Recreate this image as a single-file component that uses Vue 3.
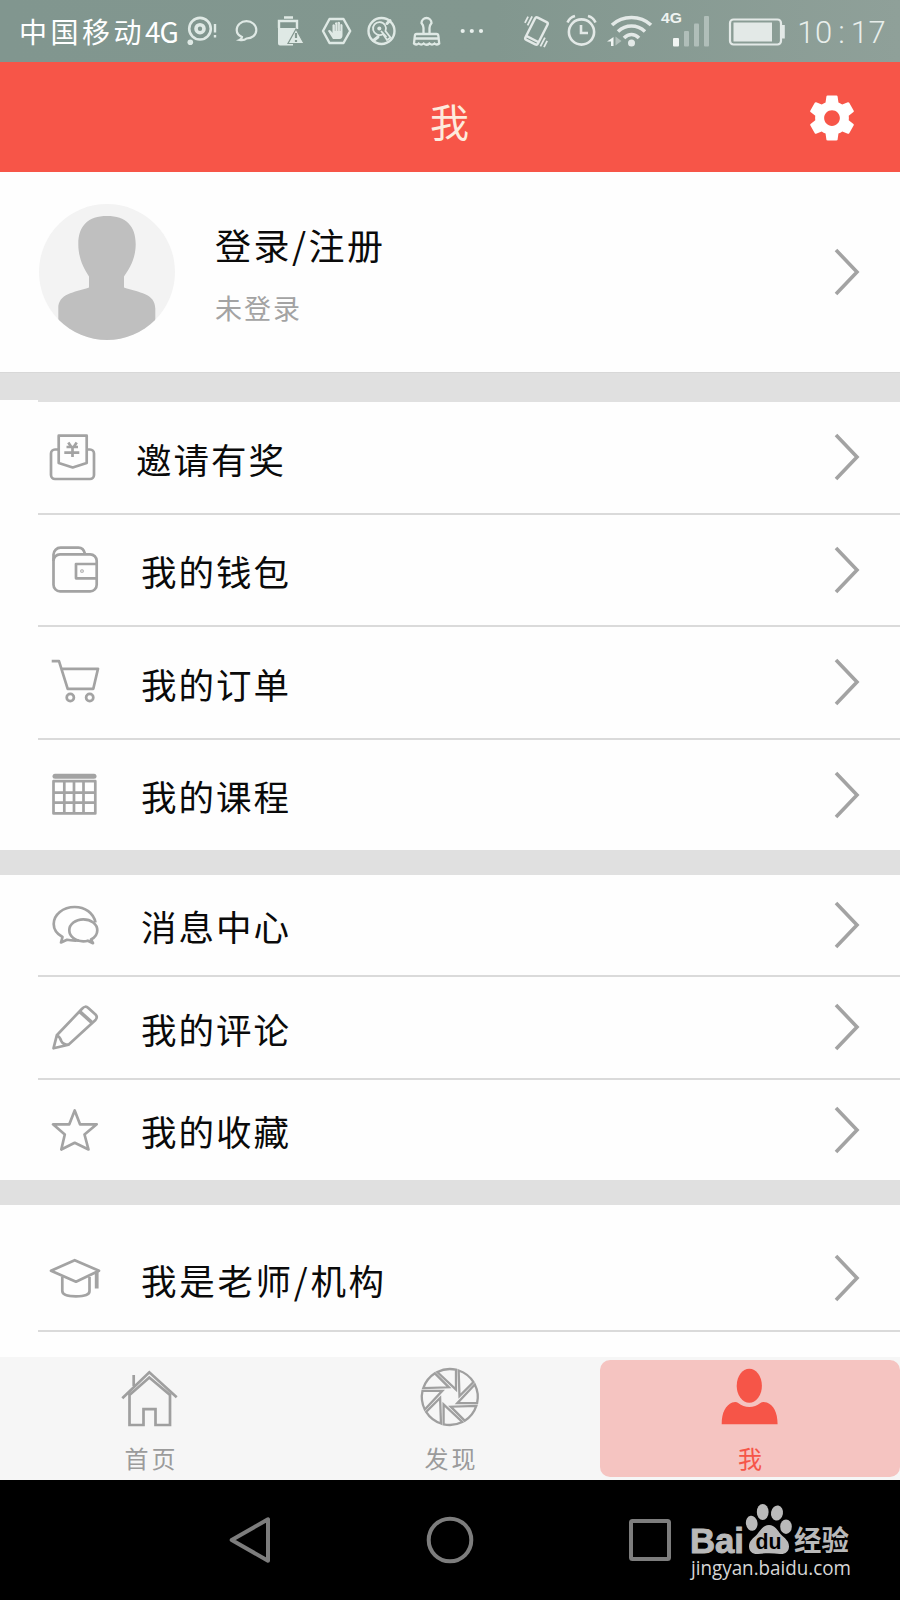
<script setup>
const groups = [
  {
    name: 'assets',
    rows: [
      {
        label: '邀请有奖', size: 'first',
        icon: '<path d="M12.7 20.5H9a4 4 0 0 0-4 4V46a4 4 0 0 0 4 4h35a4 4 0 0 0 4-4V24.500a4 4 0 0 0-4-4h-3.300M12.700 6.700h28V34l-14 4.500-14-4.500zM22.300 13.500l2.700 4M30.700 13.500l-2.700 4M20.500 18h11.500M18.300 23.700h15M26.500 18v10"/>'
      },
      {
        label: '我的钱包', size: 'second',
        icon: '<rect x="7.500" y="12.300" width="43.200" height="37" rx="6.500"/><path d="M7.500 19v-6.500a7 7 0 0 1 7-6.800h18q5 0 6.500 6.200M50.700 22H30v14.300h20.700"/><circle cx="36" cy="29" r=".5"/>'
      },
      {
        label: '我的订单', size: 'third',
        icon: '<path d="M5.700 7.200H13l8.700 27.600h25.600L52 14.800H15.800"/><circle cx="24.300" cy="43.500" r="3.600"/><circle cx="43.700" cy="43.500" r="3.600"/>'
      },
      {
        label: '我的课程', size: 'fourth',
        icon: '<path stroke-width="5" stroke-linecap="round" d="M9 9.200H48"/><path d="M7.500 14.200h41.800v32.200H7.500zM18.300 14v32M28 14v32M37.500 14v32M7.500 25.700h42M7.500 35.700h42"/>'
      }
    ]
  },
  {
    name: 'messages',
    rows: [
      {
        label: '消息中心', size: 'fifth',
        icon: '<path d="M49.500 25.500C47.500 16 39 10 28.700 10 17 10 7.700 17.500 7.700 27c0 5.500 3.300 10 8.800 13l-1.500 5.500 6-2.700c4 1 8 .7 12 .7"/><path d="M45 42.500c4-2 6.300-5.500 6.300-9.200 0-6.200-6.200-11-14-11s-14 5-14 11 6 11 14 11q2.500 0 4.500-.6l5.200 2.500z"/>'
      },
      {
        label: '我的评论', size: 'sixth',
        icon: '<path d="M7.500 49.300l3.300-13L36.300 9.500q3-3.300 6-.5l7.200 6.500q2.500 2.500 0 5.500L22.500 45.700zM10.800 36.500q3 1 4.500 5.500 1.500 3.500 7 3.700"/><path stroke-width="3.600" d="M34 12.800l11.700 10.500"/>'
      },
      {
        label: '我的收藏', size: 'seventh',
        icon: '<path d="M28.700 8.500L34 22.300h16.700L38.500 32.500l4 15-13.800-6.700-13.400 6.700 3.500-15L7 22.300h16.300z"/>'
      }
    ]
  },
  {
    name: 'teacher',
    rows: [
      {
        label: '我是老师/机构', size: 'eighth',
        icon: '<path d="M5 20.700L28.700 10.200 53 20.700 30 31.700z"/><path d="M16.300 27v14q0 5.300 13.700 5.300T43.500 41V27"/><path stroke-width="3.800" d="M50.700 22v16.500"/>'
      }
    ]
  }
]
const blades = [0, 45, 90, 135, 180, 225, 270, 315]
const clock = ['1', '0', ':', '1', '7']
</script>

<template>
  <div class="screen">
    <div class="status">
      <span class="carrier">中国移动<i>4G</i></span>
      <svg class="notices" viewBox="186 0 304 62" fill="none" stroke="#dfe9e5" stroke-width="2.200">
        <circle cx="201" cy="28.700" r="10.800" stroke-width="2.600" />
        <circle cx="201" cy="28.700" r="4" stroke-width="3.600" />
        <circle cx="191.300" cy="42.300" r="2.800" fill="#dfe9e5" stroke="none" />
        <path d="M216 24v8.500M216 35v2.500" stroke-width="2.400" />
        <path d="M240.500 40c2-1 2.500-2 2.500-3-3.500-1.500-5.300-4-5.300-7 0-5 4.300-8.800 9.800-8.800s9.800 3.800 9.800 8.800-4.300 8.500-9.800 8.500c-2 2-4 2-7 1.500z" />
        <path d="M280 28v-7h18v8M285 17.500h9" stroke-width="2.400" />
        <path d="M279 28h19l-9 16h5v1.500h-13q-2 0-2-2z" fill="#dfe9e5" stroke="none" />
        <path d="M297 29l8 14.500h-16z" fill="#dfe9e5" stroke="#84978f" stroke-width="1.200" />
        <path d="M297 33v5M297 40v2" stroke="#84978f" />
        <path d="M330.500 19h14l6.700 12-6.700 12h-14L324 31z" stroke-width="2.400" stroke-linejoin="round" />
        <path d="M334 39l-5-8q1-2 3 0l1.500 2v-8q1.300-1.500 2.500 0v-2q1.300-1.500 2.500 0v-.5q1.300-1.500 2.500 0v2q1.500-1 2.500.5V35q0 4-3 4z" fill="#dfe9e5" stroke="none" />
        <path d="M336.200 24v7M338.700 23v8M341.200 24v7" stroke="#84978f" stroke-width=".5" />
        <circle cx="382.500" cy="31" r="13" stroke-width="2.400" />
        <path d="M384 34a6.500 6.500 0 1 1 2.500-3l5 6.500-3.500 2.500z" stroke-width="1.800" />
        <circle cx="380.300" cy="28.500" r="2" fill="#dfe9e5" stroke="none" />
        <path d="M382 31l5.500 6" stroke-width="1.800" />
        <path d="M374.500 40.500l4.500-3.500M391 20.500l-3 3" stroke-width="3" stroke-linecap="round" />
        <path d="M424.500 34v-6q0-2.500-2-5a4.800 4.800 0 1 1 10 0q-2 2.500-2 5v6M417.500 34h20q1.700 0 1.900 2l.8 7.500q-2.700 2-4.700 0-2.500 2.200-5 0-3 2.500-5.800 0-2.500 2.200-5 0-2.200 2-4.700 0l.8-7.500q.2-2 1.700-2zM416 38.500h23.500" stroke-width="2.300" />
        <g fill="#e9f0ed" stroke="none"><circle cx="463.700" cy="31" r="2.100" /><circle cx="472.800" cy="31" r="2.100" /><circle cx="482" cy="31" r="2.100" /></g>
      </svg>
      <svg class="signals" viewBox="520 0 270 62" fill="none" stroke="#e3e9e7" stroke-width="2.400">
        <g transform="rotate(27 537.500 31)">
          <rect x="530.500" y="18.500" width="14" height="25" rx="2" />
          <path d="M530.500 40h14" />
          <path d="M527 20v10M523.500 22v7M548 33v10M551.500 35v7" stroke-width="1.800" />
        </g>
        <circle cx="582.500" cy="32" r="12.600" stroke-width="2.600" />
        <path d="M582 25v8h7M568.500 22.500q2-5 7.500-6.500M596.500 22.500q-2-5-7.500-6.500" stroke-width="2.600" />
        <path d="M613 25q8-7.500 19.500-7.500T652 25M619 31.500q6-5.500 13.500-5.500t13.500 5.500M625 38q3.500-3.500 7.500-3.500t7.500 3.500" stroke-width="3.600" />
        <circle cx="632.500" cy="43" r="3.500" fill="#e3e9e7" stroke="none" />
        <path d="M608 41.500l6.500-4.500v9h-2.500v-4.500z" fill="#f0f4f2" stroke="none" />
        <path d="M616.500 36.500v9l6-4.500z" fill="#b3c0bb" stroke="none" />
        <text class="net" x="662" y="23" textLength="21" lengthAdjust="spacingAndGlyphs">4G</text>
        <rect x="674" y="38" width="6" height="8.500" rx="1" fill="#f1f5f3" stroke="none" />
        <g fill="#b0beb9" stroke="none"><rect x="685" y="31" width="5" height="15.500" rx="1" /><rect x="695" y="23.500" width="5" height="23" rx="1" /><rect x="705" y="16" width="5" height="30.500" rx="1" /></g>
        <rect x="731" y="19.500" width="51" height="25" rx="3.500" stroke-width="2.200" />
        <rect x="734.500" y="22.500" width="38.500" height="19" fill="#e3e9e7" stroke="none" />
        <path d="M784.300 25v13.500" stroke-width="3" />
      </svg>
      <span class="clock"><b v-for="(c, i) in clock" :key="i">{{ c }}</b></span>
    </div>

    <header class="titlebar">
      <h1>我</h1>
      <svg class="gear" viewBox="0 0 24 24" fill="#fff"><path d="M19.430 12.980c.04-.32.07-.64.07-.98s-.03-.66-.07-.98l2.110-1.650c.19-.15.24-.42.12-.64l-2-3.460c-.12-.22-.39-.3-.61-.22l-2.490 1c-.52-.4-1.080-.73-1.690-.98l-.38-2.650C14.460 2.180 14.250 2 14 2h-4c-.25 0-.46.18-.49.42l-.38 2.650c-.61.25-1.170.59-1.690.98l-2.490-1c-.23-.09-.49 0-.61.22l-2 3.460c-.13.22-.07.49.12.64l2.110 1.650c-.04.32-.07.65-.07.98s.03.66.07.98l-2.110 1.650c-.19.15-.24.42-.12.64l2 3.460c.12.22.39.3.61.22l2.490-1c.52.4 1.080.73 1.690.98l.38 2.650c.03.24.24.42.49.42h4c.25 0 .46-.18.49-.42l.38-2.650c.61-.25 1.170-.59 1.690-.98l2.490 1c.23.09.49 0 .61-.22l2-3.460c.12-.22.07-.49-.12-.64l-2.110-1.650zM12 15.500c-1.930 0-3.500-1.570-3.500-3.500s1.570-3.500 3.500-3.500 3.500 1.570 3.500 3.500-1.570 3.500-3.500 3.500z" /></svg>
    </header>

    <section class="profile">
      <svg class="avatar" viewBox="0 0 136 136">
        <defs><clipPath id="face"><circle cx="68" cy="68" r="68" /></clipPath></defs>
        <circle cx="68" cy="68" r="68" fill="#f3f3f3" />
        <path clip-path="url(#face)" fill="#bfbfbf" d="M68 12c19 0 28.700 10 28.700 28 0 14-5.700 24-11.700 32.500v11c15 5 31.300 6 31.300 21V136h-97v-31.500c0-15 15.700-16 30.700-21v-11C44.500 64 39.300 54 39.300 40 39.300 22 49 12 68 12z" />
      </svg>
      <div class="who">
        <strong>登录/注册</strong>
        <span>未登录</span>
      </div>
      <svg class="chev" viewBox="0 0 26 48"><path d="M2 2l21 22L2 46" /></svg>
    </section>
    <div class="gap tall"><i></i></div>

    <template v-for="(g, gi) in groups" :key="g.name">
      <div v-if="gi" class="gap"></div>
      <section class="group">
        <div v-for="r in g.rows" :key="r.label" class="row" :class="r.size">
          <svg class="icon" viewBox="0 0 56 56" v-html="r.icon"></svg>
          <span class="label">{{ r.label }}</span>
          <svg class="chev" viewBox="0 0 26 48"><path d="M2 2l21 22L2 46" /></svg>
        </div>
      </section>
    </template>
    <div class="rest"></div>

    <nav class="tabs">
      <a class="tab">
        <svg viewBox="0 0 64 64" fill="none" stroke="#9f9f9f" stroke-width="2.700">
          <path d="M4.300 32.300L31.300 6.300l27.400 25M15.700 20V9M11.500 29v30h14V43.200h12V59H52V29L31.300 11.500z" />
        </svg>
        <span>首页</span>
      </a>
      <a class="tab">
        <svg viewBox="0 0 64 64" fill="none" stroke="#9f9f9f" stroke-width="2.300">
          <g transform="translate(31.800 31)">
            <path v-for="b in blades" :key="b" :transform="`rotate(${b})`" d="M-12.500-25A28 28 0 0 1 6.200-27.300V-7.500z" />
          </g>
        </svg>
        <span>发现</span>
      </a>
      <a class="tab active">
        <svg viewBox="0 0 64 64" fill="#f65548">
          <ellipse cx="31.300" cy="19.700" rx="12.600" ry="17" />
          <path d="M3.700 58.300c0-12 4-19 10.500-21.800q4-1.200 6 .5 5 4 11.100 4t11.100-4q2-1.700 6.500-.5c6.500 2.500 10.700 9.500 10.700 21.800z" />
        </svg>
        <span>我</span>
      </a>
    </nav>

    <footer class="keys">
      <div class="buttons">
        <svg viewBox="0 0 60 60"><path d="M11.700 30L48 9.300v41.400z" /></svg>
        <svg viewBox="0 0 60 60"><circle cx="30" cy="30" r="21.300" /></svg>
        <svg viewBox="0 0 60 60"><rect x="11" y="11" width="38" height="38" rx="1.500" /></svg>
      </div>
      <svg class="mark" viewBox="685 1495 180 95" fill="#b9b9b9">
        <text class="latin" x="690" y="1552.500" textLength="54" lengthAdjust="spacingAndGlyphs">Bai</text>
        <ellipse cx="751.700" cy="1523.300" rx="5.800" ry="7.600" transform="rotate(-8 751.700 1523.300)" />
        <ellipse cx="762.700" cy="1512" rx="5.900" ry="8" />
        <ellipse cx="777" cy="1513" rx="6" ry="7.600" transform="rotate(10 777 1513)" />
        <ellipse cx="786" cy="1526.700" rx="5.800" ry="7.300" />
        <path d="M769 1525c6 0 8.500 5.500 12 9.500 4 4 8 6.500 8 12 0 5-4 8-9 7.500-7-1-15-1-22 0-5 .5-9-2.500-9-7.500 0-5.500 4-8 8-12 3.500-4 6-9.500 12-9.500z" />
        <text class="du" x="755.500" y="1549" textLength="26" lengthAdjust="spacingAndGlyphs">du</text>
        <text class="han" x="794" y="1550.500" textLength="55" lengthAdjust="spacingAndGlyphs">经验</text>
        <text class="url" x="691" y="1574.500" textLength="160" lengthAdjust="spacingAndGlyphs">jingyan.baidu.com</text>
      </svg>
    </footer>
  </div>
</template>

<style>
body { margin: 0; background: #fff; }
</style>

<style scoped>
.screen {
  width: 900px;
  height: 1600px;
  overflow: hidden;
  display: flex;
  flex-direction: column;
  background: #fefefe;
  color: #0a0a0a;
  font-family: KaiTi, STKaiti, "Noto Sans CJK SC", sans-serif;
}
.screen > * { flex-shrink: 0; box-sizing: border-box; }
.status {
  height: 62px;
  display: flex;
  align-items: center;
  background: linear-gradient(90deg, #81968f 0%, #82978f 55%, #8fa099 100%);
}
.carrier {
  width: 166px;
  padding-left: 19px;
  font-size: 28px;
  letter-spacing: 3.500px;
  line-height: 64px;
  white-space: nowrap;
  color: #fff;
}
.carrier i { font-style: normal; font-size: 28px; letter-spacing: -1px; }
.notices { width: 304px; height: 62px; }
.signals { width: 270px; height: 62px; margin-left: 30px; }
.net { font: bold 15px "Liberation Sans", sans-serif; fill: #eef3f1; stroke: none; }
.clock { display: flex; padding: 3px 0 0 8px; color: #e8eeeb; font: 300 31px Roboto, sans-serif; }
.clock b { width: 17.800px; font-weight: 300; text-align: center; }
.titlebar {
  height: 110px;
  display: flex;
  align-items: center;
  justify-content: flex-end;
  position: relative;
  background: #f75548;
}
h1 {
  flex: 1;
  margin: 0;
  padding: 6px 0 0 94px;
  text-align: center;
  font-size: 39px;
  line-height: 58px;
  font-weight: 400;
  color: #fdebdd;
}
.gear { width: 54px; height: 54px; margin: 1px 41px 0 0; }
.profile {
  height: 200px;
  display: flex;
  align-items: center;
  padding: 0 40px 0 39px;
}
.avatar { width: 136px; height: 136px; }
.who {
  flex: 1;
  display: flex;
  flex-direction: column;
  gap: 12px;
  padding: 8px 0 0 40px;
}
.who strong { font-size: 36px; line-height: 54px; font-weight: 400; letter-spacing: 2.500px; }
.who span { font-size: 27px; line-height: 56px; letter-spacing: 2px; margin-top: -3px; color: #a3a3a3; }
.chev {
  width: 26px;
  height: 48px;
  margin-top: -1px;
  fill: none;
  stroke: #a3a3a3;
  stroke-width: 3.600;
}
.gap { height: 25px; background: #e0e0e0; }
.tall { height: 30px; display: flex; align-items: flex-end; border-top: 1px solid #d8d8d8; border-bottom: 0; }
.tall i { width: 38px; height: 2px; background: #fefefe; }
.row {
  display: flex;
  align-items: center;
  box-sizing: border-box;
  margin-left: 38px;
  padding: 0 40px 0 8px;
  border-bottom: 2px solid #dadada;
}
.row:last-child { border-bottom: 0; }
.first, .third { height: 113px; }
.second { height: 112px; }
.fourth { height: 110px; }
.fifth { height: 102px; }
.sixth { height: 103px; }
.seventh { height: 100px; }
.row.eighth { height: 127px; padding-top: 22px; border-bottom: 2px solid #dadada; }
.icon {
  width: 56px;
  height: 56px;
  margin-top: -1px;
  fill: none;
  stroke: #a3a3a3;
  stroke-width: 2.700;
  stroke-linejoin: round;
}
.label {
  flex: 1;
  padding: 2px 0 0 39px;
  font-size: 35.500px;
  line-height: 54px;
  letter-spacing: 2px;
}
.eighth .label { letter-spacing: 2.700px; }
.first .label { padding-left: 34px; }
.rest { height: 25px; }
.tabs {
  height: 123px;
  display: grid;
  grid-template-columns: repeat(3, 300px);
  padding: 3px 0;
  background: #f6f6f6;
}
.tab {
  display: flex;
  flex-direction: column;
  align-items: center;
  padding-top: 6px;
  border-radius: 10px;
  color: #9b9b9b;
}
.tab svg { width: 64px; height: 64px; }
.tab span { margin-top: 10px; font-size: 24px; line-height: 36px; letter-spacing: 3px; padding-left: 3px; }
.active { background: #f5c4c1; color: #f65548; }
.keys { height: 120px; position: relative; background: #000; }
.buttons { display: grid; grid-template-columns: repeat(3, 200px); justify-items: center; padding: 30px 0 0 150px; }
.buttons svg {
  width: 60px;
  height: 60px;
  fill: none;
  stroke: #7d7d7d;
  stroke-width: 4;
  stroke-linejoin: round;
}
.mark { position: absolute; left: 685px; top: 15px; width: 180px; height: 95px; }
.latin { font: bold 35px "Liberation Sans", sans-serif; stroke: #b9b9b9; stroke-width: 1; }
.du { font: bold 22px "Liberation Sans", sans-serif; fill: #000; }
.han { font: bold 28px "Noto Sans CJK SC", sans-serif; }
.url { font: 20px "Open Sans", "Noto Sans", sans-serif; fill: #d6d6d6; }
</style>
